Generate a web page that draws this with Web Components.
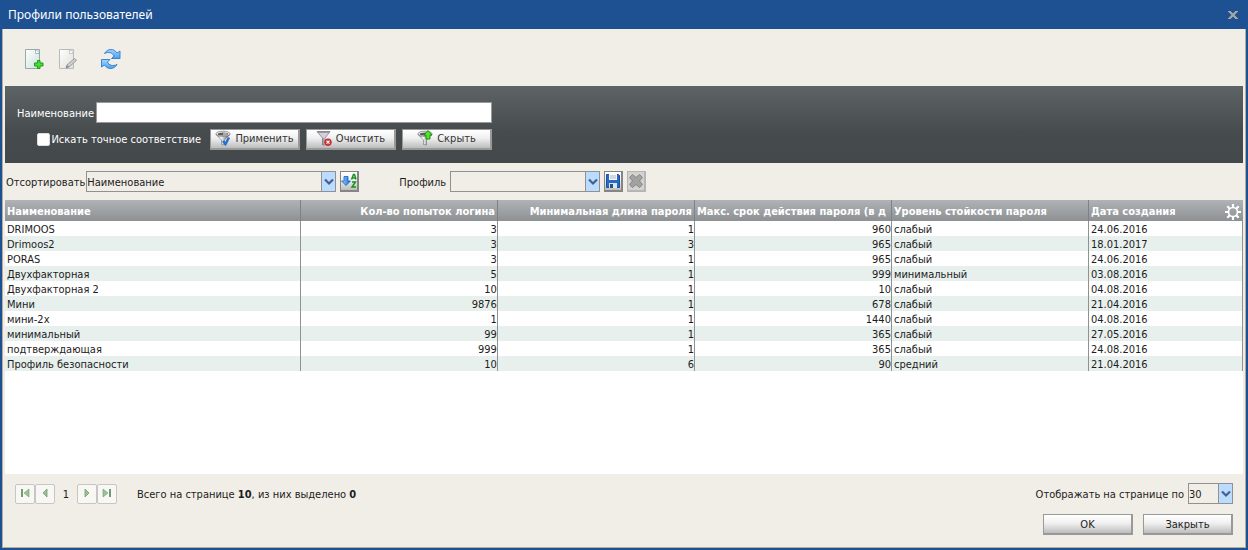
<!DOCTYPE html>
<html lang="ru">
<head>
<meta charset="utf-8">
<title>Профили пользователей</title>
<style>
  html { height: 100%; }
  body {
    margin: 0; min-height: 100%; display: flex;
    font: 11px/15px "DejaVu Sans Condensed", "Noto Sans", sans-serif;
    color: #1c1c1c; background: #1e5192;
    --paper: #f1eee7; --line: #919191;
  }
  profile-window { flex: 1; }
</style>
</head>
<body>
<profile-window></profile-window>

<script>
const define = (name, html, ready) => {
  const template = document.createElement('template');
  template.innerHTML = html;
  customElements.define(name, class extends HTMLElement {
    constructor() {
      super();
      this.attachShadow({ mode: 'open' }).append(template.content.cloneNode(true));
    }
    connectedCallback() {
      if (ready && !this.ready) { this.ready = true; ready(this, this.shadowRoot); }
    }
  });
};

const funnel = `<path d="M1 4.500 6.500 10v4.500l3 .5v-5L15 4.500z" fill="url(#m)" stroke="#6d6d6d" stroke-width=".6"/>
  <ellipse cx="8" cy="3.800" rx="7" ry="2.600" fill="#f4f4f4" stroke="#707070" stroke-width=".7"/>
  <ellipse cx="8" cy="4" rx="5.300" ry="1.600" fill="#5d5d5d"/><path d="M8 5.500q4 0 5-1.500-2-1.200-5-1.200z" fill="#aaa"/>`;
const metal = `<defs><linearGradient id="m"><stop stop-color="#777"/><stop offset=".35" stop-color="#fff"/><stop offset=".6" stop-color="#b5b5b5"/><stop offset="1" stop-color="#3c3c3c"/></linearGradient></defs>`;
const sheet = (light, dark) => `<defs><linearGradient id="p" x2="1" y2="1"><stop stop-color="#fff"/><stop offset="1" stop-color="${light}"/></linearGradient></defs>
  <path d="M.5.500h14v19H.5z" fill="url(#p)" stroke="${dark}"/><path d="M10.500 1v3.500H14q-.5-3-3.500-3.500z" fill="#fff" stroke="${dark}" stroke-width=".8"/><path d="M11 1.200h3v3z" fill="${light}"/>`;

const icons = {
  add: [19, 20, sheet('#c9e2df', '#9aa8a8') + `<path d="M12.500 11.500h2.500v2.500h3v3h-3v2.500h-2.500V17h-3v-3h3z" fill="#4ede2e" stroke="#1c9a1c"/>`],
  edit: [19, 20, sheet('#dededb', '#bababa') + `<path d="m7 19 1-3 7.500-6.500 2 1.800-7.500 6.700z" fill="#d0d0d0" stroke="#9a9a9a"/><path d="m7 19 1-3 2 2z" fill="#888"/>`],
  refresh: [20, 20, `<defs><linearGradient id="b" y2="1" x2="0"><stop stop-color="#a5d5ff"/><stop offset="1" stop-color="#4aa0f2"/></linearGradient></defs>
    <g fill="url(#b)" stroke="#2f7bcc" stroke-width=".9"><path d="M3.500 4.500C6.500-.8 13-.8 16 4L19 2v7.500h-8.500L13 7C11.500 3.500 7.500 2.500 3.500 4.500z"/><path d="M16 15.500C13 20.800 6.500 20.800 3.500 16L.5 18v-7.500H9L6.500 13c1.500 3.500 5.500 4.500 9.500 2.500z"/></g>`],
  apply: [16, 16, metal + funnel + `<path d="m8 11 2.500 3L14 7.500" fill="none" stroke="#2272d6" stroke-width="2.500"/>`],
  clear: [16, 16, `<path d="M1 1.500h13L9 8v7H6.500V8z" fill="#d5cedb" stroke="#85808a" stroke-width=".8"/><path d="M1.500 2h12" stroke="#8b8591" stroke-width="1.500"/><path d="M7 8v7" stroke="#777"/><circle cx="12" cy="12.200" r="3.400" fill="#d93434" stroke="#a51c1c" stroke-width=".6"/><path d="m10.500 10.700 3 3m0-3-3 3" stroke="#fff" stroke-width="1.100"/>`],
  hide: [16, 16, metal + funnel + `<path d="m11 .500 4 4.500h-2v4H9V5H7z" fill="#52e524" stroke="#168316" stroke-width=".9"/>`],
  sort: [16, 16, `<defs><linearGradient id="s"><stop stop-color="#9bd8fb"/><stop offset="1" stop-color="#1764ce"/></linearGradient></defs>
    <path d="M3 3.500h4V8h2.500L5 12.500.500 8H3z" fill="url(#s)" stroke="#1763bd" stroke-width=".8"/><path d="m10.500 6.500 2-5h1l1.500 5m-3.500-1.500h3M11 9h3.500L11 14h4" fill="none" stroke="#15941c" stroke-width="1.500"/>`],
  save: [16, 16, `<path d="M1.500 1.500h12l1 1v12h-13z" fill="#2769c5" stroke="#194f9c"/><path d="M4 1h8v6H4z" fill="#f6f8fb"/><path d="M5 3h6M5 5h6" stroke="#aab7cb"/><path d="M4 10h8v5H4z" fill="#dce4ed"/><path d="M5 11h3v4H5z" fill="#264e88"/>`],
  remove: [16, 16, `<path d="m4.500 1.500 3.500 3 3.500-3 3 3-3 3.500 3 3.500-3 3-3.500-3-3.500 3-3-3 3-3.500-3-3.500z" fill="#a2a2a0" stroke="#858585"/>`],
  gear: [16, 16, `<g stroke="#fff" fill="none"><circle cx="8" cy="8" r="4.500" stroke-width="1.700"/><path d="M8 0v3m0 10v3M0 8h3m10 0h3M2.300 2.300l2.200 2.200m7 7 2.200 2.200m0-11.400-2.200 2.200m-7 7-2.200 2.200" stroke-width="2.200"/></g>`],
  chevron: [10, 8, `<path d="m1 1.500 4 4 4-4" fill="none" stroke="#47608b" stroke-width="2.200"/>`],
  close: [10, 8, `<path d="M0 .500h3m4 0h3M0 7.500h3m4 0h3" stroke="#a5a7a6"/><path d="m1.500.500 7 7m0-7-7 7" stroke="#a5a7a6" stroke-width="2.200"/>`],
  first: [10, 10, `<path d="M1 1h2v8H1z" fill="#719c70"/><path d="M9 1v8L4 5z" fill="#9bc19a" stroke="#719c70" stroke-width=".6"/>`],
  prev: [10, 10, `<path d="M7 1v8L3 5z" fill="#9bc19a" stroke="#719c70" stroke-width=".8"/>`],
  next: [10, 10, `<path d="M3 1v8l4-4z" fill="#9bc19a" stroke="#719c70" stroke-width=".8"/>`],
  last: [10, 10, `<path d="M7 1h2v8H7z" fill="#719c70"/><path d="M1 1v8l5-4z" fill="#9bc19a" stroke="#719c70" stroke-width=".6"/>`]
};

define('ui-icon', `<style>:host{display:inline-flex;flex:none} svg{display:block}</style>`, (el, root) => {
  const [w, h, art] = icons[el.getAttribute('name')];
  root.innerHTML += `<svg width="${w}" height="${h}" viewBox="0 0 ${w} ${h}" aria-hidden="true">${art}</svg>`;
});

/* Push button; kinds: plain (no chrome), dialog (text only), tool (square), page (pager). */
define('ui-button', `<style>
  :host{display:inline-flex}
  button{font:inherit;color:inherit;box-sizing:border-box;width:90px;height:21px;padding:0 3px 2px;margin:0;
    display:flex;align-items:center;justify-content:center;gap:4px;border:1px solid #999;border-width:1px 2px 2px 1px;
    background:linear-gradient(#fff,#f0f0f0 45%,#bdbdbd);border-radius:0}
  :host([kind=dialog]) button{padding:1px 3px 0}
  :host([kind=plain]) button{width:auto;height:auto;padding:0;border:0;background:none}
  :host([kind=tool]) button{width:19px;padding:0;border-color:#858585}
  :host([kind=page]) button{width:20px;height:20px;padding:0 0 1px;border:1px solid #c6c6c6;border-radius:2px;background:#f8f7f4}
  :host([kind=tool][off]) button{border-color:#b5b5b5;background:#d2d2d0}
</style><button type="button"><slot></slot></button>`, (el, root) => {
  const b = root.querySelector('button');
  if (el.title) b.setAttribute('aria-label', el.title);
  b.disabled = el.hasAttribute('off');
});

define('ui-select', `<style>
  :host{display:flex;align-items:center;gap:var(--gap, 4px)}
  label{padding-top:1px}
  .box{display:grid;grid-template-columns:1fr 14px;box-sizing:border-box;width:var(--w);height:21px;border:1px solid var(--line)}
  select{grid-area:1/1/2/3;appearance:none;margin:0;padding:1px 15px 0 0;border:0;border-radius:0;background:none;font:inherit;color:inherit;min-width:0}
  .arrow{grid-area:1/2;display:flex;align-items:center;justify-content:center;background:#bbdcff;border-left:1px solid var(--line);pointer-events:none}
</style><label for="s"></label><div class="box"><select id="s"></select><span class="arrow"><ui-icon name="chevron"></ui-icon></span></div>`, (el, root) => {
  root.querySelector('label').textContent = el.getAttribute('label');
  root.querySelector('select').add(new Option(el.getAttribute('value')));
});

define('title-bar', `<style>
  :host{display:flex;align-items:center;justify-content:space-between;height:29px;padding:0 10px 0 8px;color:#fff}
  h1{font:400 12px/16px "Noto Sans",sans-serif;margin:0}
</style><h1><slot></slot></h1><ui-button kind="plain" title="Закрыть окно"><ui-icon name="close"></ui-icon></ui-button>`);

define('tool-bar', `<style>
  :host{display:flex;align-items:center;gap:15px;height:57px;padding:3px 20px 0;box-sizing:border-box}
  .sep{margin-left:8px}
</style>
<ui-button kind="plain" title="Добавить"><ui-icon name="add"></ui-icon></ui-button>
<ui-button kind="plain" title="Изменить"><ui-icon name="edit"></ui-icon></ui-button>
<ui-button kind="plain" class="sep" title="Обновить"><ui-icon name="refresh"></ui-icon></ui-button>`);

define('filter-panel', `<style>
  :host{display:block;padding:16px 0 13px;color:#fff;background:linear-gradient(#5e6366,#464b4e 60%,#43484b)}
  .grid{display:grid;width:487px;gap:6px}
  .row{display:flex;justify-content:flex-end;align-items:center;gap:2px}
  .row > label{padding-top:1px}
  .text{box-sizing:border-box;width:396px;height:21px;margin:0;border:1px solid #999;border-radius:0;background:#fff;font:inherit;padding:0 2px}
  .exact{display:flex;align-items:center;gap:1px;margin-right:7px}
  .check{appearance:none;width:13px;height:13px;margin:0;border:1px solid #ddd;border-radius:2px;background:#fff}
  .buttons{display:flex;gap:6px;color:#333}
</style>
<div class="grid">
  <div class="row"><label for="name">Наименование</label><input class="text" id="name"></div>
  <div class="row">
    <div class="exact"><input class="check" id="exact" type="checkbox"><label for="exact">Искать точное соответствие</label></div>
    <div class="buttons">
      <ui-button><ui-icon name="apply"></ui-icon>Применить</ui-button>
      <ui-button><ui-icon name="clear"></ui-icon>Очистить</ui-button>
      <ui-button><ui-icon name="hide"></ui-icon>Скрыть</ui-button>
    </div>
  </div>
</div>`);

define('sort-bar', `<style>
  :host{display:flex;align-items:center;height:37px;padding:0 1px;gap:40px}
  .group{display:flex;align-items:center;gap:4px}
  .field{--w:250px;--gap:1px} .profile{--w:150px}
</style>
<div class="group"><ui-select class="field" label="Отсортировать" value="Наименование"></ui-select>
  <ui-button kind="tool" title="Порядок"><ui-icon name="sort"></ui-icon></ui-button></div>
<div class="group"><ui-select class="profile" label="Профиль" value=""></ui-select>
  <ui-button kind="tool" title="Сохранить"><ui-icon name="save"></ui-icon></ui-button>
  <ui-button kind="tool" off title="Удалить"><ui-icon name="remove"></ui-icon></ui-button></div>`);

define('profile-table', `<style>
  :host{display:block;background:#fff}
  table{width:100%;table-layout:fixed;border-collapse:separate;border-spacing:0}
  .first{width:23.900%}.last{width:12.440%}
  th,td{box-sizing:border-box;padding:2px 0 0 2px;overflow:hidden;white-space:nowrap;text-align:left;border-right:1px solid var(--line)}
  th{height:21px;padding:2px 2px 0;color:#fff;border-color:#7e8285}
  thead tr{background:linear-gradient(#afb3b7,#8d9193)}
  th:last-child{border-right:0}
  td{height:15px;line-height:13px}
  tbody tr:nth-child(even){background:#e8f0ed}
  .num{text-align:right}
  .head{display:flex;align-items:center;justify-content:space-between}
</style>
<table><colgroup><col class="first"><col><col><col><col><col class="last"></colgroup>
<thead><tr><th>Наименование</th><th class="num">Кол-во попыток логина</th><th class="num">Минимальная длина пароля</th><th>Макс. срок действия пароля (в д</th><th>Уровень стойкости пароля</th>
<th><span class="head">Дата создания<ui-button kind="plain" title="Настройка столбцов"><ui-icon name="gear"></ui-icon></ui-button></span></th></tr></thead><tbody></tbody></table>`, (el, root) => {
  const rows = [
    ['DRIMOOS', 3, 1, 960, 'слабый', '24.06.2016'],
    ['Drimoos2', 3, 3, 965, 'слабый', '18.01.2017'],
    ['PORAS', 3, 1, 965, 'слабый', '24.06.2016'],
    ['Двухфакторная', 5, 1, 999, 'минимальный', '03.08.2016'],
    ['Двухфакторная 2', 10, 1, 10, 'слабый', '04.08.2016'],
    ['Мини', 9876, 1, 678, 'слабый', '21.04.2016'],
    ['мини-2х', 1, 1, 1440, 'слабый', '04.08.2016'],
    ['минимальный', 99, 1, 365, 'слабый', '27.05.2016'],
    ['подтверждающая', 999, 1, 365, 'слабый', '24.08.2016'],
    ['Профиль безопасности', 10, 6, 90, 'средний', '21.04.2016']
  ];
  const body = root.querySelector('tbody');
  for (const row of rows) {
    const tr = body.insertRow();
    for (const value of row) {
      const td = tr.insertCell();
      td.textContent = value;
      if (typeof value === 'number') td.className = 'num';
    }
  }
});

define('pager-bar', `<style>
  :host{display:flex;align-items:center;justify-content:space-between;padding:9px 10px 10px}
  .pages{display:flex;align-items:center}
  .current{width:22px;text-align:center}
  .total{margin-left:20px}
  .current,.total{padding-top:1px}
  ui-select{--w:45px}
</style>
<div class="pages">
  <ui-button kind="page" title="Первая"><ui-icon name="first"></ui-icon></ui-button><ui-button kind="page" title="Предыдущая"><ui-icon name="prev"></ui-icon></ui-button>
  <span class="current">1</span>
  <ui-button kind="page" title="Следующая"><ui-icon name="next"></ui-icon></ui-button><ui-button kind="page" title="Последняя"><ui-icon name="last"></ui-icon></ui-button>
  <span class="total">Всего на странице <b>10</b>, из них выделено <b>0</b></span>
</div>
<ui-select label="Отображать на странице по" value="30"></ui-select>`);

define('profile-window', `<style>
  :host{display:flex;flex-direction:column;padding:0 2px 2px;box-sizing:border-box;min-width:0}
  title-bar{margin:0 -2px}
  main{flex:1;display:flex;flex-direction:column;padding:0 2px;background:var(--paper);border:1px solid #b3aea2;border-top:0}
  profile-table{flex:1}
  footer{display:flex;justify-content:flex-end;gap:10px;padding:0 10px 12px}
</style>
<title-bar>Профили пользователей</title-bar>
<main>
  <tool-bar></tool-bar>
  <filter-panel></filter-panel>
  <sort-bar></sort-bar>
  <profile-table></profile-table>
  <pager-bar></pager-bar>
  <footer><ui-button kind="dialog">OK</ui-button><ui-button kind="dialog">Закрыть</ui-button></footer>
</main>`);
</script>
</body>
</html>
